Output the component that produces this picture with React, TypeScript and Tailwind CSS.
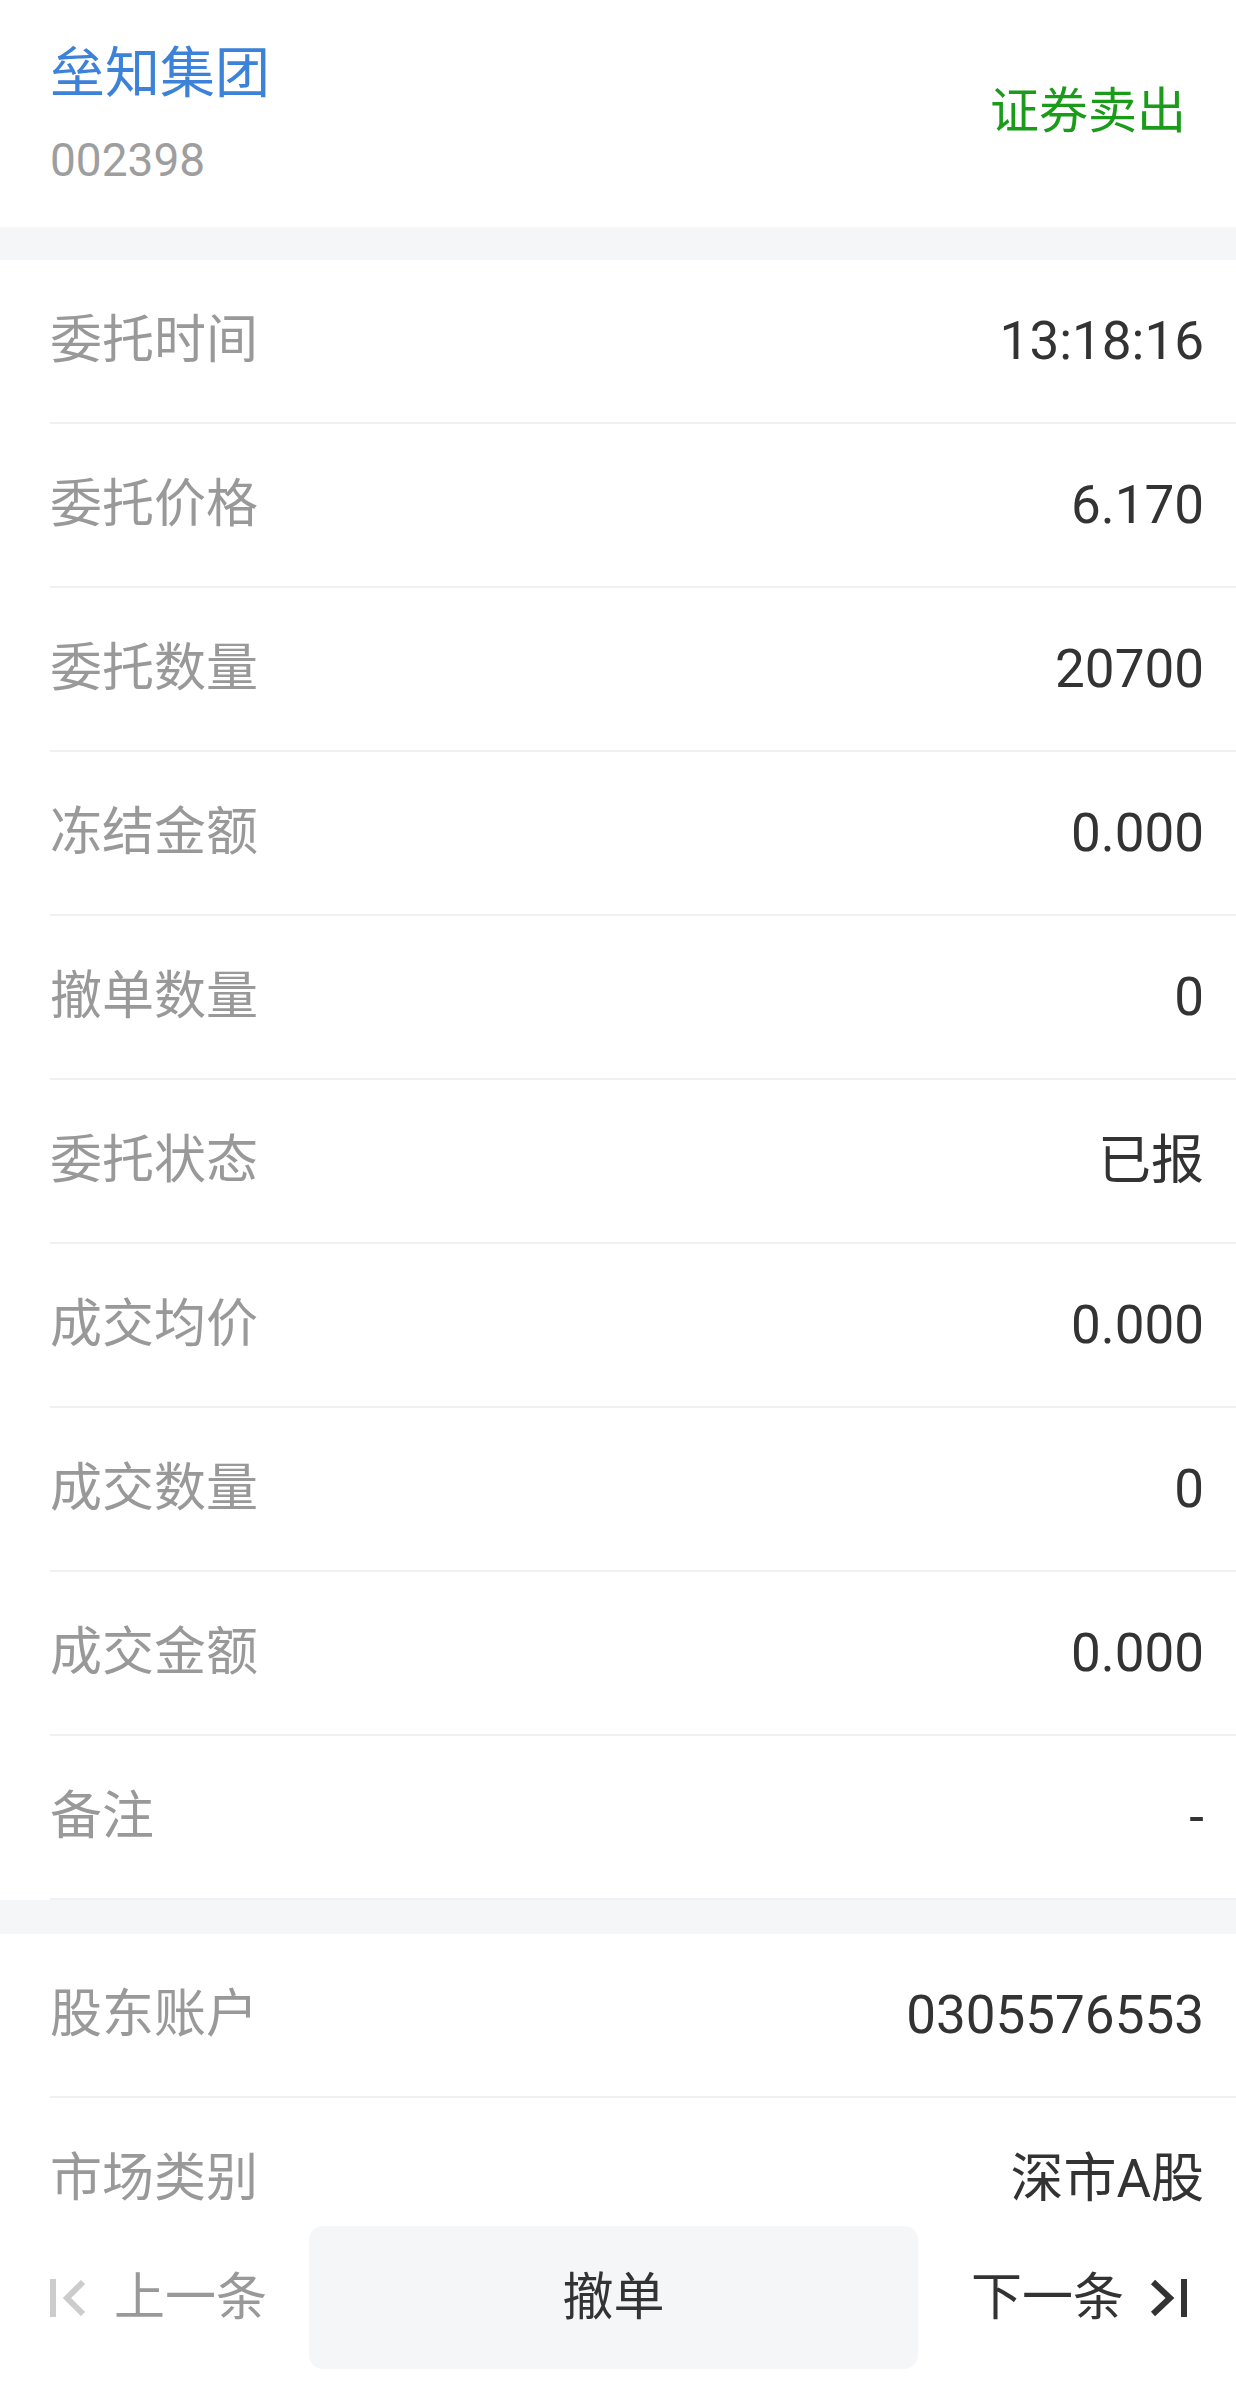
const ORDER_ROWS: [string, string][] = [
  ["委托时间", "13:18:16"],
  ["委托价格", "6.170"],
  ["委托数量", "20700"],
  ["冻结金额", "0.000"],
  ["撤单数量", "0"],
  ["委托状态", "已报"],
  ["成交均价", "0.000"],
  ["成交数量", "0"],
  ["成交金额", "0.000"],
  ["备注", "-"],
];

const ACCOUNT_ROWS: [string, string][] = [
  ["股东账户", "0305576553"],
  ["市场类别", "深市A股"],
];

function Row({ label, value }: { label: string; value: string }) {
  return (
    <div className="flex h-[164px] pl-[50px]">
      <div className="flex flex-1 items-center justify-between border-b-2 border-[#f0f0f0] pr-[32px]">
        <span className="text-[52px] leading-none text-[#999999]">{label}</span>
        <span className="text-[53px] leading-none text-[#333333]">{value}</span>
      </div>
    </div>
  );
}

function FirstIcon() {
  return (
    <svg width="36" height="40" viewBox="0 0 36 40" fill="none">
      <rect x="0" y="1" width="6" height="38" fill="#cccccc" />
      <path d="M33 4 17 20l16 16" stroke="#cccccc" strokeWidth="6" />
    </svg>
  );
}

function LastIcon() {
  return (
    <svg width="38" height="40" viewBox="0 0 38 40" fill="none">
      <path d="M3 4l17 16L3 36" stroke="#333333" strokeWidth="6" />
      <rect x="31" y="1" width="6" height="38" fill="#333333" />
    </svg>
  );
}

export default function App() {
  return (
    <div className="flex h-[2396px] flex-col bg-white font-[Roboto,'Noto_Sans_CJK_SC',sans-serif]">
      <div className="flex-1 overflow-hidden">
        <div className="flex h-[227px] items-center justify-between pl-[50px] pr-[50px]">
          <div className="flex flex-col gap-[36px] pt-[2px]">
            <span className="text-[55px] leading-none text-[#3b82d8]">垒知集团</span>
            <span className="text-[46px] leading-none text-[#9e9e9e]">002398</span>
          </div>
          <span className="pb-[4px] text-[49px] leading-none text-[#1a9c1a]">证券卖出</span>
        </div>
        <div className="h-[33px] bg-[#f5f6f8]" />
        {ORDER_ROWS.map(([l, v]) => (
          <Row key={l} label={l} value={v} />
        ))}
        <div className="h-[34px] bg-[#f5f6f8]" />
        {ACCOUNT_ROWS.map(([l, v]) => (
          <Row key={l} label={l} value={v} />
        ))}
      </div>

      <div className="flex h-[184px] items-start bg-white pt-[14px]">
        <div className="flex h-[143px] w-[309px] items-center gap-[28px] pl-[50px]">
          <FirstIcon />
          <span className="text-[51px] leading-none text-[#999999]">上一条</span>
        </div>
        <button className="flex h-[143px] w-[609px] items-center justify-center rounded-[14px] bg-[#f5f6f8] text-[51px] leading-none text-[#333333]">
          撤单
        </button>
        <div className="flex h-[143px] flex-1 items-center justify-end gap-[26px] pr-[48px]">
          <span className="text-[51px] leading-none text-[#333333]">下一条</span>
          <LastIcon />
        </div>
      </div>
    </div>
  );
}
